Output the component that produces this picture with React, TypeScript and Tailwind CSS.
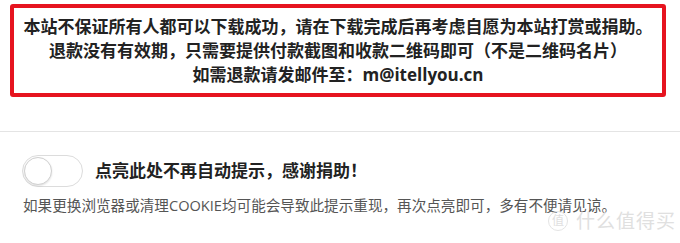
export default function App() {
  return (
    <div className="relative h-[243px] w-[680px] overflow-hidden bg-white font-['Open_Sans','Noto_Sans_CJK_SC',sans-serif]">
      <div className="pt-[4px] pl-[10px]">
        <div className="flex h-[93px] w-[656px] flex-col items-center justify-center whitespace-nowrap rounded-[3px] border-4 border-[#e6141f] text-[17px] font-bold leading-[24px] text-[#222]">
          <p>本站不保证所有人都可以下载成功，请在下载完成后再考虑自愿为本站打赏或捐助。</p>
          <p>退款没有有效期，只需要提供付款截图和收款二维码即可（不是二维码名片）</p>
          <p>如需退款请发邮件至：m@itellyou.cn</p>
        </div>
      </div>

      <div className="mt-[34px] h-px bg-[#e4e4e4]" />

      <div className="mt-[23px] flex items-center gap-[12px] pl-[22px]">
        <div className="flex h-[32px] w-[61px] items-center rounded-full border border-[#dcdcdc] bg-white px-[1px]">
          <div className="h-[28px] w-[28px] rounded-full border border-[#d0d0d0] bg-white shadow-[0_1px_2px_rgba(0,0,0,0.12)]" />
        </div>
        <p className="text-[17px] font-bold text-[#222]">点亮此处不再自动提示，感谢捐助！</p>
      </div>

      <p className="mt-[8px] whitespace-nowrap pl-[23px] text-[14.6px] text-[#555]">
        如果更换浏览器或清理COOKIE均可能会导致此提示重现，再次点亮即可，多有不便请见谅。
      </p>

      <div className="absolute bottom-[8px] right-[4px] flex items-center gap-[8px] text-[#e0e0e0]">
        <span className="flex h-[20px] w-[20px] items-center justify-center rounded-full border border-[#e4e4e4] text-[12px]">值</span>
        <span className="text-[19px] tracking-[1px]">什么值得买</span>
      </div>
    </div>
  );
}
